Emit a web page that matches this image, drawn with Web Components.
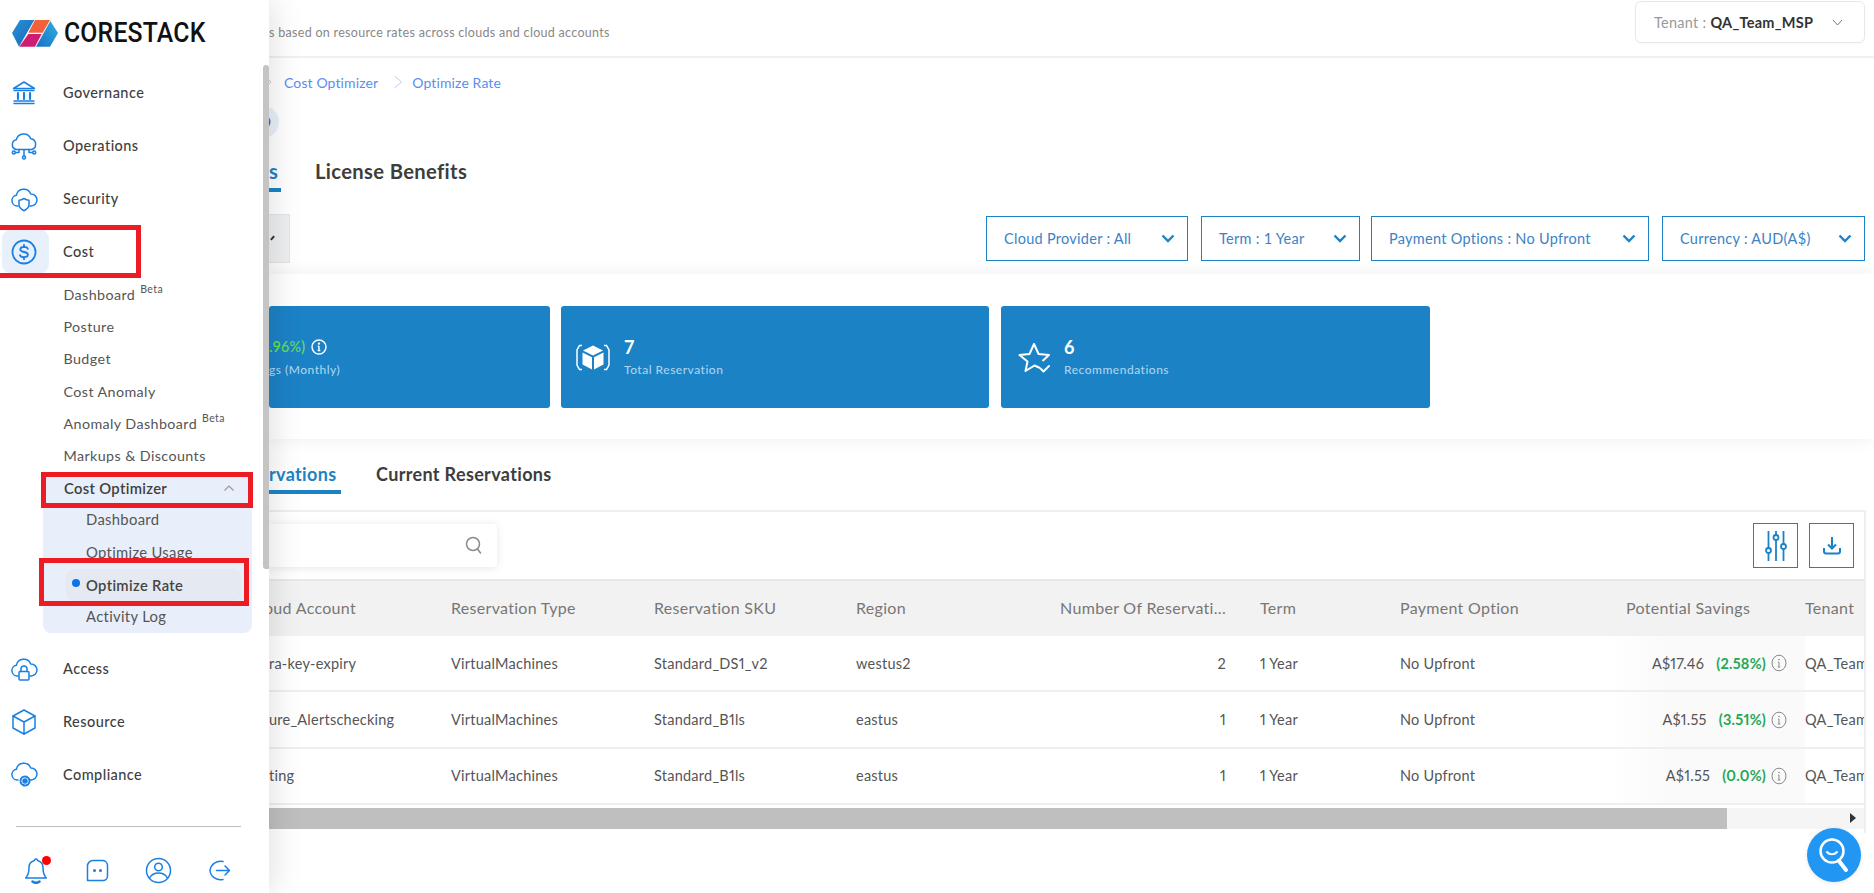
<!DOCTYPE html>
<html><head><meta charset="utf-8"><title>Optimize Rate</title>
<style>
html,body{margin:0;height:893px;overflow:hidden;background:#fff;font-family:Lato,"Open Sans",sans-serif}
body{display:flex}
</style></head><body>
<cs-sidebar></cs-sidebar>
<cs-main></cs-main>
<cs-fab></cs-fab>
<script>
const B='#1c82c6', NB='#1a7fe3';
function def(name,css,html,init){
  customElements.define(name,class extends HTMLElement{
    constructor(){super();const r=this.attachShadow({mode:'open'});
      const h=typeof html==='function'?html(this):html;
      r.innerHTML='<style>'+css+'</style>'+h;if(init)init(r,this);}
  });
}
const svg=(w,h,vb,body,extra='')=>`<svg width="${w}" height="${h}" viewBox="${vb}" fill="none" stroke="${NB}" stroke-width="1.5" stroke-linecap="round" stroke-linejoin="round" ${extra}>${body}</svg>`;
const cloud='<path d="M8 20H7.2a5.4 5.4 0 0 1-.9-10.7A7.6 7.6 0 0 1 20.8 8a6 6 0 0 1 .4 12H20"/>';
const ICONS={
 gov:svg(26,26,'0 0 26 26','<path d="M13 2 2.5 8.5h21z"/><path d="M3 10.5h20M3 23.5h20M3 21h20" /><path d="M7 13v6M13 13v6M19 13v6" stroke-width="2.2"/>'),
 ops:svg(28,28,'0 0 28 28','<path d="M6 17.5a5 5 0 0 1 .3-9.7A7.6 7.6 0 0 1 20.8 6.800a5.500 5.500 0 0 1 1 10.700H6z"/><path d="M14 17.500V24M9 17.500V20.500H5.500M19 17.500V20.500H22.500"/><circle cx="14" cy="25.500" r="1.500"/><circle cx="3.800" cy="20.500" r="1.500"/><circle cx="24.200" cy="20.500" r="1.500"/>'),
 sec:svg(30,28,'0 0 30 28',cloud.replace('<path','<path transform="translate(1 1)"')+'<path d="M15 13.500c2 1.300 3.500 1.700 5 1.700v4.300c0 3.200-2.500 5-5 6.200-2.500-1.200-5-3-5-6.200v-4.300c1.500 0 3-.4 5-1.700z"/>'),
 cost:svg(26,26,'0 0 26 26','<circle cx="13" cy="13" r="11.500" stroke-width="1.800"/><path d="M16.800 9.800c-.5-1.300-1.900-1.900-3.800-1.900-2.100 0-3.700.9-3.700 2.500 0 3.500 7.600 1.700 7.600 5.200 0 1.700-1.700 2.600-3.900 2.600-2 0-3.500-.7-4-2.100M13 6v2M13 18.200v2" stroke-width="1.800"/>'),
 acc:svg(30,28,'0 0 30 28',cloud.replace('<path','<path transform="translate(1 1)"')+'<rect x="10" y="16.500" width="10" height="8.500" rx="1"/><path d="M12 16.500v-2.500a3 3 0 0 1 6 0v2.500"/>'),
 res:svg(26,28,'0 0 26 28','<path d="M13 2 24 8v12l-11 6-11-6V8z"/><path d="M2 8l11 6 11-6M13 14v12"/>'),
 com:svg(30,28,'0 0 30 28',cloud.replace('<path','<path transform="translate(1 -1)"')+'<circle cx="16" cy="20" r="2" fill="'+NB+'"/><circle cx="16" cy="20" r="4.500" stroke-dasharray="2 1.500" stroke-width="2"/>')
};

def('cs-logo',':host{display:flex;align-items:center;height:66px;padding-left:12px;box-sizing:border-box}svg{display:block;flex:none}span{display:inline-block;font:500 28px Roboto,sans-serif;letter-spacing:.2px;color:#111;margin-left:6px;line-height:1;transform:scaleX(.885);transform-origin:left center}',
`<svg width="46" height="28" viewBox="12 14 46 28"><defs><linearGradient id="l" x1="0" x2="1" y1="0" y2="1"><stop offset="0" stop-color="#2a93d8"/><stop offset="1" stop-color="#1565b4"/></linearGradient><linearGradient id="r" x1="1" x2="0" y1="0" y2="1"><stop offset="0" stop-color="#2cb0e4"/><stop offset="1" stop-color="#1b6fc0"/></linearGradient></defs>
<polygon points="20,15 34.300,15 19,41.700 12,28" fill="url(#l)"/><polygon points="35,15 50,15 42.700,27.700 28.300,27.700" fill="#f2603c"/><polygon points="28.300,29 41.700,29 35,41.700 19.300,41.700" fill="#cf1c74"/><polygon points="50.300,16 58,28 50,41.700 36,41.700" fill="url(#r)"/></svg><span>CORESTACK</span>`);

def('cs-nav-item',':host{display:flex;align-items:center;height:53px;font-size:14.5px;font-weight:500;color:#3f3f3f;letter-spacing:.45px;position:relative}.i{width:47px;height:45px;margin-left:2px;display:flex;align-items:center;justify-content:center;border-radius:10px;flex:none}.i svg{margin-left:-3px}:host([active]) .i{background:#e8f0fc}.t{margin-left:14px}',
 h=>`<div class="i">${ICONS[h.getAttribute('icon')]}</div><div class="t"><slot></slot></div>`);

def('cs-sub-item',':host{display:flex;align-items:center;height:32.300px;padding-left:63.500px;font-size:14.300px;color:#555;letter-spacing:.4px;box-sizing:border-box}sup{font-size:10.500px;margin-left:5px;position:relative;top:-1px;vertical-align:super;line-height:0}',
 h=>`<span><slot></slot>${h.hasAttribute('beta')?'<sup>Beta</sup>':''}</span>`);

def('cs-opt-panel',`:host{display:block;margin-left:43px;width:209px;background:#e8effb;border-radius:0 0 8px 8px}
.r{height:32.300px;display:flex;align-items:center;font-size:14.800px;color:#555;letter-spacing:.32px;padding:0 0 2px 43px;box-sizing:border-box;position:relative}
.h{padding:0 17px 0 21px;font-weight:600;color:#3f3f3f;justify-content:space-between}
.a{margin:0 11px 0 23px;width:175px;padding:0 0 0 20px;background:#e4e9f2;border-radius:8px;font-weight:600;color:#444}
.a::before{content:"";position:absolute;left:6px;top:10px;width:8px;height:8px;border-radius:50%;background:#0b72e7}
svg{display:block}`,
`<div class="r h"><span>Cost Optimizer</span><svg width="12" height="8" viewBox="0 0 12 8" fill="none" stroke="#999" stroke-width="1.200"><path d="M1.500 6.500 6 2l4.500 4.500"/></svg></div>
<div class="r">Dashboard</div><div class="r">Optimize Usage</div><div class="r a">Optimize Rate</div><div class="r">Activity Log</div>`);

def('cs-sidebar-footer',':host{display:flex;margin:25px 28px 0 16px;border-top:1px solid #bdbdbd;padding-top:30px}.w{width:61px;flex:none;display:flex;justify-content:center;align-items:center;height:27px;position:relative}.d{position:absolute;left:36px;top:-1px;width:9px;height:9px;border-radius:50%;background:#f00}',
`<div class="w" style="margin-left:-10.500px">${svg(24,27,'0 0 24 27','<path d="M12 2c-1 0-1.600.7-1.600 1.500C7 4.500 5 7 5 10.500c0 5.500-1 8-3.300 10.500h20.600C20 18.500 19 16 19 10.500c0-3.500-2-6-5.400-7C13.600 2.700 13 2 12 2z"/><path d="M8.500 24.500c2 1.500 5 1.500 7 0" stroke-width="2.500"/>')}<span class="d"></span></div>
<div class="w">${svg(23,23,'0 0 23 23','<path d="M7 1.500h10a5 5 0 0 1 4.500 5V17a4.500 4.500 0 0 1-4.500 4.500H1.500V7A5.500 5.500 0 0 1 7 1.500z"/><circle cx="8.500" cy="11.500" r=".8" stroke-width="1.400"/><circle cx="14.500" cy="11.500" r=".8" stroke-width="1.400"/>')}</div>
<div class="w">${svg(27,27,'0 0 27 27','<circle cx="13.500" cy="13.500" r="12"/><circle cx="13.500" cy="10" r="3.800"/><path d="M4.500 21c2-3.500 5-5 9-5s7 1.500 9 5"/>')}</div>
<div class="w">${svg(23,25,'0 0 23 25','<path d="M15 3.500A10.500 10.500 0 0 0 2 12.500a10.500 10.500 0 0 0 13 9M8.500 12.500h13M17 8l4.500 4.500L17 17"/>')}</div>`);

def('cs-sidebar',`:host{display:block;width:269px;flex:none;height:893px;background:#fff;position:relative;z-index:5;box-shadow:3px 0 30px rgba(0,0,0,.13)}
.thumb{position:absolute;left:263px;top:65px;width:6px;height:504px;background:#c4c4c4;border-radius:3px 3px 0 3px}
.red{position:absolute;border:5px solid #ed1c24;box-sizing:border-box}
.g{height:9px}`,
`<cs-logo></cs-logo>
<cs-nav-item icon="gov">Governance</cs-nav-item><cs-nav-item icon="ops">Operations</cs-nav-item><cs-nav-item icon="sec">Security</cs-nav-item><cs-nav-item icon="cost" active>Cost</cs-nav-item>
<cs-sub-item beta>Dashboard</cs-sub-item><cs-sub-item>Posture</cs-sub-item><cs-sub-item>Budget</cs-sub-item><cs-sub-item>Cost Anomaly</cs-sub-item><cs-sub-item beta>Anomaly Dashboard</cs-sub-item><cs-sub-item>Markups &amp; Discounts</cs-sub-item>
<cs-opt-panel></cs-opt-panel><div class="g"></div>
<cs-nav-item icon="acc">Access</cs-nav-item><cs-nav-item icon="res">Resource</cs-nav-item><cs-nav-item icon="com">Compliance</cs-nav-item>
<cs-sidebar-footer></cs-sidebar-footer>
<div class="thumb"></div>
<div class="red" style="left:-5px;top:225px;width:146px;height:53px"></div>
<div class="red" style="left:41px;top:472px;width:212px;height:36px"></div>
<div class="red" style="left:39px;top:558px;width:210px;height:48px"></div>`);

def('cs-header',`:host{display:flex;height:58px;box-sizing:border-box;border-bottom:2px solid #f0f0f0;justify-content:space-between;padding-right:9px}
.s{font-size:12.500px;color:#888;letter-spacing:.3px;padding-top:25px}
.t{width:230px;height:42px;margin-top:1px;box-sizing:border-box;border:1px solid #e8e8e8;border-radius:6px;display:flex;align-items:center;padding-left:18px;font-size:14.500px;color:#999;letter-spacing:.27px;box-shadow:0 1px 2px rgba(0,0,0,.03)}
b{font-weight:700;color:#333;margin-left:4px}svg{margin-left:19px}`,
`<div class="s">s based on resource rates across clouds and cloud accounts</div>
<div class="t">Tenant : <b>QA_Team_MSP</b><svg width="11" height="7" viewBox="0 0 11 7" fill="none" stroke="#777"><path d="M1 1l4.500 5L10 1"/></svg></div>`);

def('cs-crumb',`:host{display:flex;align-items:center;height:48px;font-size:14px;color:#5b8def;letter-spacing:.12px}svg{display:block}`,
`<svg width="3" height="10" viewBox="0 0 3 10" fill="none" stroke="#b9cdf5" style="margin-right:12px"><path d="M-2 1l4 4-4 4"/></svg><span>Cost Optimizer</span><svg width="10" height="14" viewBox="0 0 10 14" fill="none" stroke="#b9cdf5" style="margin:0 9px 0 15px"><path d="M1.500 1l7 6-7 6"/></svg><span>Optimize Rate</span>`);

def('cs-help',`:host{display:block;width:32px;height:32px;margin-left:-22px;border-radius:50%;background:#e9f0fb;position:relative}svg{position:absolute;left:8px;top:8px}`,
`<svg width="16" height="16" viewBox="0 0 16 16" fill="none" stroke="#2e6fe0" stroke-width="2"><circle cx="8" cy="8" r="6.500"/></svg>`);

def('cs-tabs',`:host{display:flex;align-items:flex-start;font-weight:700;color:#3d3d3d;letter-spacing:.35px}
.a{color:${B};border-bottom:4px solid ${B};box-sizing:border-box}`,
 h=>{const f=h.getAttribute('fs'),hh=h.getAttribute('hh');const u=h.getAttribute('uw'),g=h.getAttribute('gap');
 return `<div class="a" style="font-size:${f}px;width:${u}px;height:${hh}px;line-height:${hh-5}px">${h.getAttribute('active')}</div><div style="font-size:${f}px;line-height:${hh-5}px;margin-left:${g}px">${h.getAttribute('other')}</div>`});

def('cs-dropdown',`:host{display:flex;align-items:center;justify-content:space-between;height:45px;box-sizing:border-box;border:1.500px solid ${B};padding:0 12px 0 17px;font-size:14.500px;color:#3c82c6;letter-spacing:.28px}svg{display:block;flex:none}`,
`<span><slot></slot></span><svg width="14" height="9" viewBox="0 0 14 9" fill="none" stroke="${B}" stroke-width="2.400"><path d="M1.500 1.500 7 7l5.500-5.500"/></svg>`);

def('cs-filters',`:host{display:flex;align-items:center;height:49px;margin-top:1px;padding-right:9px}
.b{width:21px;height:49px;box-sizing:border-box;background:#eeeff1;border:1px solid #e3e4e6;border-left:0;position:relative;flex:none}
.b::after{content:"";position:absolute;left:1px;top:22px;width:5px;height:2px;background:#333;transform:rotate(-50deg)}
.s{flex:1}`,
`<div class="b"></div><div class="s"></div>
<cs-dropdown style="width:202px">Cloud Provider : All</cs-dropdown><cs-dropdown style="width:159px;margin-left:13px">Term : 1 Year</cs-dropdown><cs-dropdown style="width:278px;margin-left:11px">Payment Options : No Upfront</cs-dropdown><cs-dropdown style="width:203px;margin-left:13px">Currency : AUD(A$)</cs-dropdown>`);

def('cs-stat',`:host{display:flex;align-items:center;background:${B};border-radius:3px;height:102px;box-sizing:border-box;color:#fff}
.ic{flex:none;display:flex;align-items:center;justify-content:center}
.v{font-size:18px;font-weight:700;line-height:24px;display:flex;align-items:center}
.l{font-size:12px;color:#a9d3ee;font-weight:500;letter-spacing:.5px;line-height:20px;margin-top:1px}`,
 h=>`<div class="ic"><slot name="icon"></slot></div><div><div class="v"><slot name="v"></slot></div><div class="l"><slot name="l"></slot></div></div>`);

def('cs-summary',`:host{display:block;height:165px;margin-top:11px;box-sizing:border-box;padding-top:32px;background:#fff;box-shadow:0 0 16px rgba(0,0,0,.07);position:relative}
.row{display:flex;gap:11px}
.g{color:#66e04c;font-weight:500;font-size:14.300px;letter-spacing:.2px}
svg{display:block}`,
`<div class="row">
<cs-stat style="width:281px"><span slot="v" style="display:flex;align-items:center"><span class="g">.96%)</span><svg style="margin-left:6px" width="16" height="16" viewBox="0 0 16 16" fill="none" stroke="#fff" stroke-width="1.400"><circle cx="8" cy="8" r="7"/><path d="M8 7.200v4.300M6.700 11.500h2.600M6.800 7.200H8"/><circle cx="8" cy="4.600" r=".5" fill="#fff"/></svg></span><span slot="l">gs (Monthly)</span></cs-stat>
<cs-stat style="width:428px"><span slot="icon" style="width:63px;display:flex;justify-content:center"><svg width="34" height="27" viewBox="0 0 34 27"><path d="M6 1.500H3.500L1 6v15l2.500 4.500H6M28 1.500h2.500L33 6v15l-2.500 4.500H28" fill="none" stroke="#fff" stroke-width="1.500"/><path d="M17 1.500 27 6.500 17 11.500 7 6.500z M6.500 8.500 16 13.300V25.500L6.500 20.500z M27.500 8.500 18 13.300V25.500l9.500-5z" fill="#fff"/></svg></span><span slot="v">7</span><span slot="l">Total Reservation</span></cs-stat>
<cs-stat style="width:429px;margin-left:1px"><span slot="icon" style="width:63px;display:flex;justify-content:center"><svg style="margin-left:4px" width="33" height="31" viewBox="0 0 33 31" fill="none" stroke="#fff" stroke-width="2" stroke-linejoin="round"><path d="M22 26 16.500 23.500 7.500 29l2-9.500L1.500 13l10-1L16 2l4.600 10 10.400 1-6.500 6"/><path d="M22.500 26.500l3 3L31 24" stroke-linecap="round"/></svg></span><span slot="v">6</span><span slot="l">Recommendations</span></cs-stat>
</div>`);

const rows=[['ra-key-expiry','Standard_DS1_v2','westus2','2','A$17.46','(2.58%)'],['ure_Alertschecking','Standard_B1ls','eastus','1','A$1.55','(3.51%)'],['ting','Standard_B1ls','eastus','1','A$1.55','(0.0%)']];
const info=`<svg width="16" height="18" viewBox="0 0 16 18" fill="none" stroke="#888" stroke-width="1"><ellipse cx="8" cy="9" rx="7" ry="7.800"/><path d="M8 8v5M6.800 13h2.400M7 8h1"/><circle cx="8" cy="5.500" r=".4"/></svg>`;
def('cs-table',`:host{display:block;margin-right:8px;margin-top:16px;border-top:2px solid #efefef;border-right:2px solid #efefef;overflow:hidden;height:321px}
.tb{display:flex;align-items:center;height:67px;box-sizing:border-box;padding-right:10px}
.search{width:228px;height:43px;margin-bottom:1px;background:#fff;box-shadow:0 1px 8px rgba(0,0,0,.1);border-radius:0 3px 3px 0;display:flex;align-items:center;justify-content:flex-end;padding-right:15px;box-sizing:border-box}
.sp{flex:1}
.btn{width:45px;height:45px;box-sizing:border-box;border:1.500px solid ${B};display:flex;align-items:center;justify-content:center;margin-left:11px}
.g{display:grid;grid-template-columns:182px 203px 202px 174px 230px 140px 210px 195px 60px;width:1596px}
.c{height:56.400px;display:flex;align-items:center;white-space:nowrap;font-size:14.500px;color:#555;letter-spacing:.24px;border-bottom:2px solid #efefef;box-sizing:border-box;overflow:hidden;font-variant-numeric:proportional-nums}
.h{height:57px;background:#f2f2f2;color:#777;font-size:16px;border-top:2px solid #e8e8e8;border-bottom:0;letter-spacing:.3px;padding-bottom:2px}
.n{justify-content:flex-end;padding-right:34px}
.p{justify-content:flex-end;padding-right:18px;background:linear-gradient(90deg,#fff,#fafafa 30%,#fafafa)}
.ph{padding-left:16px}
.pc{color:#1fa855;font-weight:700;margin:0 5px 0 12px}
.bar{height:21px;margin-top:3px;background:#f5f5f5;position:relative;display:flex}
.th{width:1458px;background:#bfbfbf}
.ar{position:absolute;right:8px;top:5px;border-left:6px solid #333;border-top:5.500px solid transparent;border-bottom:5.500px solid transparent}
svg{display:block;flex:none}`,
()=>`<div class="tb"><div class="search"><svg width="17" height="18" viewBox="0 0 17 18" fill="none" stroke="#8a8a8a" stroke-width="1.500" stroke-linecap="round"><circle cx="8" cy="8" r="6.500"/><path d="M12.500 13l3 4"/></svg></div><div class="sp"></div>
<div class="btn"><svg width="22" height="32" viewBox="0 0 22 32" fill="none" stroke="${B}" stroke-width="1.800"><path d="M3.500 1v17M3.500 23v8M11 1v4M11 10v21M18.500 1v13M18.500 19v12"/><circle cx="3.500" cy="20.500" r="2.500"/><circle cx="11" cy="7.500" r="2.500"/><circle cx="18.500" cy="16.500" r="2.500"/></svg></div>
<div class="btn"><svg width="18" height="19" viewBox="0 0 18 19" fill="none" stroke="${B}" stroke-width="2"><path d="M9 1v11M5 8.500l4 4 4-4"/><path d="M1 12v3.500a2 2 0 0 0 2 2h12a2 2 0 0 0 2-2V12"/></svg></div></div>
<div class="g">
<div class="c h"><span style="margin-left:-5px">oud Account</span></div><div class="c h">Reservation Type</div><div class="c h">Reservation SKU</div><div class="c h">Region</div><div class="c h n">Number Of Reservati...</div><div class="c h">Term</div><div class="c h">Payment Option</div><div class="c h ph">Potential Savings</div><div class="c h">Tenant</div>
${rows.map(r=>`<div class="c">${r[0]}</div><div class="c">VirtualMachines</div><div class="c">${r[1]}</div><div class="c">${r[2]}</div><div class="c n">${r[3]}</div><div class="c">1 Year</div><div class="c">No Upfront</div><div class="c p">${r[4]}<span class="pc">${r[5]}</span>${info}</div><div class="c">QA_Team_MSP</div>`).join('')}
</div><div class="bar"><div class="th"></div><div class="ar"></div></div>`);

def('cs-main',`:host{display:block;flex:1;min-width:0;height:893px;overflow:hidden;background:#fff}`,
`<cs-header></cs-header><cs-crumb></cs-crumb><cs-help></cs-help>
<cs-tabs style="margin-top:17px;height:58px" fs="20.200" hh="37" uw="12" gap="34" active="s" other="License Benefits"></cs-tabs>
<cs-filters></cs-filters>
<cs-summary></cs-summary>
<cs-tabs style="margin-top:21px" fs="18" hh="34" uw="72" gap="35" active="rvations" other="Current Reservations"></cs-tabs>
<cs-table></cs-table>`);

def('cs-fab',`:host{position:fixed;left:1807px;top:828px;width:54px;height:54px;border-radius:50%;background:#2196f3;display:flex;align-items:center;justify-content:center;box-shadow:0 1px 4px rgba(0,0,0,.1)}`,
`<svg width="32" height="36" viewBox="0 0 32 36" fill="none" stroke="#fff" stroke-width="2.500" stroke-linecap="round"><circle cx="14" cy="14" r="11.500"/><path d="M9 15c2.500 3 7.500 3 10 0" stroke-width="2"/><path d="M21 24l7 9" stroke-width="4"/></svg>`);
</script>
</body></html>
